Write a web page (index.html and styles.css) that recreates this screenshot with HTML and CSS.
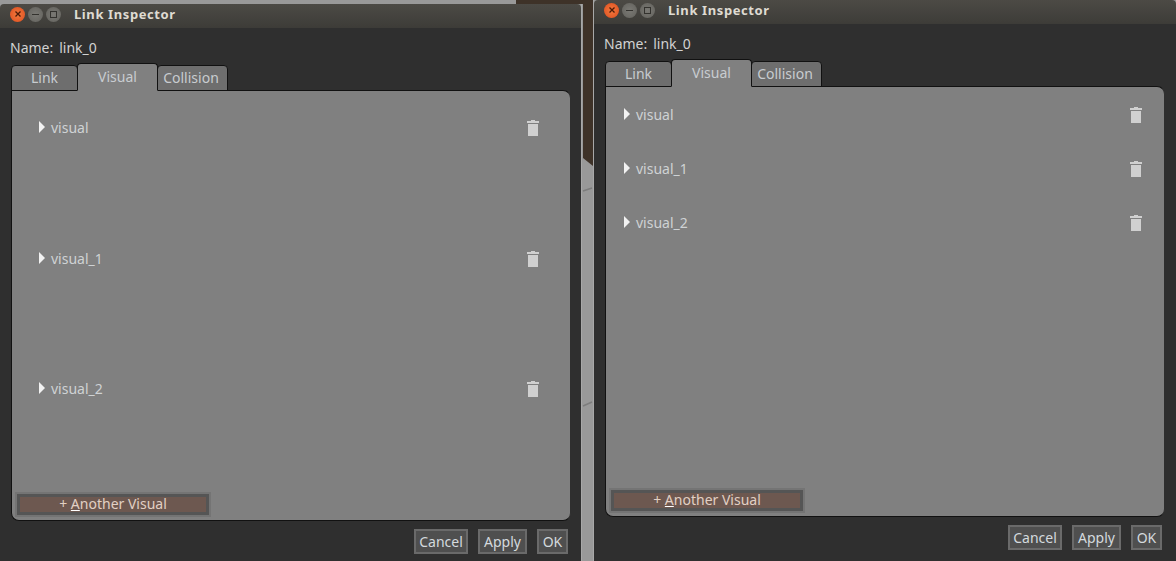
FILE: index.html
```html
<!DOCTYPE html>
<html lang="en">
<head>
<meta charset="UTF-8" />
<title>Link Inspector</title>
<link rel="stylesheet" href="styles.css">
</head>
<body>

  <div class="desktop">
    <svg class="backdrop" width="1176" height="561" viewBox="0 0 1176 561">
      <path d="M516 0H593V166L583 158V4H516z" fill="#3e3228"/>
      <path d="M583 191L592 188M583 406L592 402" stroke="#7d7d7d" stroke-width="1.5" fill="none"/>
    </svg>

    <div class="window window-left">
      <div class="titlebar">
        <div class="win-btn win-close">
          <svg width="8" height="8" viewBox="0 0 8 8"><path d="M1.500 1.500l5 5M6.500 1.500l-5 5" stroke="#4a1a08" stroke-width="1.3" fill="none"/></svg>
        </div>
        <div class="win-btn"><span class="glyph-min"></span></div>
        <div class="win-btn"><span class="glyph-max"></span></div>
        <div class="win-title">Link Inspector</div>
      </div>
      <div class="content">
        <div class="name-row"><span>Name:</span><span>link_0</span></div>
        <div class="tabs">
          <div class="tab tab-link">Link</div>
          <div class="tab tab-visual">Visual</div>
          <div class="tab tab-collision">Collision</div>
        </div>
        <div class="panel">
          <div class="rows rows-tall">
            <div class="row">
              <span class="arrow"></span><span class="row-name">visual</span>
              <svg class="trash" width="12" height="16" viewBox="0 0 12 16"><path d="M4 0h4v1h4v2H0V1h4zM1 4h10v12H1z" fill="#d0d0d0"/></svg>
            </div>
            <div class="row">
              <span class="arrow"></span><span class="row-name">visual_1</span>
              <svg class="trash" width="12" height="16" viewBox="0 0 12 16"><path d="M4 0h4v1h4v2H0V1h4zM1 4h10v12H1z" fill="#d0d0d0"/></svg>
            </div>
            <div class="row">
              <span class="arrow"></span><span class="row-name">visual_2</span>
              <svg class="trash" width="12" height="16" viewBox="0 0 12 16"><path d="M4 0h4v1h4v2H0V1h4zM1 4h10v12H1z" fill="#d0d0d0"/></svg>
            </div>
          </div>
          <div class="add-btn"><div class="add-inner">+ <u>A</u>nother Visual</div></div>
        </div>
        <div class="actions">
          <div class="btn btn-cancel">Cancel</div>
          <div class="btn btn-apply">Apply</div>
          <div class="btn btn-ok">OK</div>
        </div>
      </div>
    </div>

    <div class="window window-right">
      <div class="titlebar">
        <div class="win-btn win-close">
          <svg width="8" height="8" viewBox="0 0 8 8"><path d="M1.500 1.500l5 5M6.500 1.500l-5 5" stroke="#4a1a08" stroke-width="1.3" fill="none"/></svg>
        </div>
        <div class="win-btn"><span class="glyph-min"></span></div>
        <div class="win-btn"><span class="glyph-max"></span></div>
        <div class="win-title">Link Inspector</div>
      </div>
      <div class="content">
        <div class="name-row"><span>Name:</span><span>link_0</span></div>
        <div class="tabs">
          <div class="tab tab-link">Link</div>
          <div class="tab tab-visual">Visual</div>
          <div class="tab tab-collision">Collision</div>
        </div>
        <div class="panel">
          <div class="rows rows-short">
            <div class="row">
              <span class="arrow"></span><span class="row-name">visual</span>
              <svg class="trash" width="12" height="16" viewBox="0 0 12 16"><path d="M4 0h4v1h4v2H0V1h4zM1 4h10v12H1z" fill="#d0d0d0"/></svg>
            </div>
            <div class="row">
              <span class="arrow"></span><span class="row-name">visual_1</span>
              <svg class="trash" width="12" height="16" viewBox="0 0 12 16"><path d="M4 0h4v1h4v2H0V1h4zM1 4h10v12H1z" fill="#d0d0d0"/></svg>
            </div>
            <div class="row">
              <span class="arrow"></span><span class="row-name">visual_2</span>
              <svg class="trash" width="12" height="16" viewBox="0 0 12 16"><path d="M4 0h4v1h4v2H0V1h4zM1 4h10v12H1z" fill="#d0d0d0"/></svg>
            </div>
          </div>
          <div class="add-btn"><div class="add-inner">+ <u>A</u>nother Visual</div></div>
        </div>
        <div class="actions">
          <div class="btn btn-cancel">Cancel</div>
          <div class="btn btn-apply">Apply</div>
          <div class="btn btn-ok">OK</div>
        </div>
      </div>
    </div>
  </div>

</body>
</html>
```

FILE: styles.css
```css
html, body {
  margin: 0;
  height: 100%;
  overflow: hidden;
  background: #999;
}
.desktop {
  position: relative;
  width: 1176px;
  height: 561px;
  overflow: hidden;
  font-family: "Noto Sans", "Open Sans", sans-serif;
  font-size: 14px;
  color: #d2d2d2;
}
.backdrop {
  position: absolute;
  top: 0;
  left: 0;
}
.window {
  position: absolute;
  display: flex;
  flex-direction: column;
  box-sizing: border-box;
}
.window-left {
  left: 0;
  top: 4px;
  width: 582px;
  height: 557px;
  border-right: 1px solid #a8a8a8;
}
.window-right {
  left: 593px;
  top: 0;
  width: 583px;
  height: 561px;
  border-left: 1px solid #a8a8a8;
}

.titlebar {
  box-sizing: border-box;
  height: 24px;
  flex: none;
  display: flex;
  align-items: center;
  padding: 0 0 4px 10px;
  gap: 3px;
  background: linear-gradient(#4c4a45, #3d3c38);
  border-radius: 4px 4px 0 0;
}
.win-btn {
  width: 15px;
  height: 15px;
  flex: none;
  border-radius: 50%;
  display: flex;
  align-items: center;
  justify-content: center;
  background: radial-gradient(#7a7974, #62615c);
}
.win-close {
  background: radial-gradient(#f07a3e, #de4c1e);
}
.glyph-min {
  width: 7px;
  height: 1px;
  background: #33322e;
}
.glyph-max {
  width: 5px;
  height: 5px;
  border: 1px solid #33322e;
}
.win-title {
  margin-left: 10px;
  font-weight: 700;
  font-size: 13px;
  letter-spacing: 0.6px;
  color: #dfdbd2;
}

.content {
  flex: 1;
  display: flex;
  flex-direction: column;
  background: #2f2f2f;
  padding: 0 11px;
}
.name-row {
  height: 35px;
  flex: none;
  padding-top: 4px;
  box-sizing: border-box;
  display: flex;
  align-items: center;
  gap: 6px;
  margin-left: -1px;
}

.tabs {
  display: flex;
  align-items: flex-end;
  height: 28px;
  flex: none;
  margin-bottom: -1px;
}
.tab {
  box-sizing: border-box;
  display: flex;
  align-items: center;
  justify-content: center;
  height: 26px;
  padding-bottom: 2px;
  border: 1px solid #111;
  border-radius: 4px 4px 0 0;
  background: #6e6e6e;
  color: #c8ccd0;
}
.tab-link { width: 67px; }
.tab-visual {
  width: 81px;
  height: 28px;
  margin-left: -1px;
  background: #808080;
  border-bottom: 1px solid #808080;
  position: relative;
  z-index: 1;
}
.tab-collision { width: 71px; margin-left: -1px; padding-right: 3px; }

.panel {
  box-sizing: border-box;
  width: 560px;
  height: 431px;
  flex: none;
  display: flex;
  flex-direction: column;
  justify-content: space-between;
  background: #808080;
  border: 1px solid #111;
  border-right-color: #2f2f2f;
  border-radius: 0 8px 8px 8px;
}
.rows { display: flex; flex-direction: column; }
.rows-tall { padding-top: 28px; }
.rows-tall .row { height: 130.5px; padding: 0 31px 0 27px; }
.rows-short { padding-top: 19px; }
.rows-short .row { height: 54px; padding: 0 22px 0 18px; }
.row {
  box-sizing: border-box;
  display: flex;
  align-items: flex-start;
}
.row:last-child { height: auto; }
.arrow {
  width: 0;
  height: 0;
  margin-top: 2px;
  border-left: 6px solid #f2f2f2;
  border-top: 6px solid transparent;
  border-bottom: 6px solid transparent;
}
.row-name {
  margin: -1px 0 0 6px;
  line-height: 20px;
  color: #cfd2d4;
  flex: 1;
}
.trash { margin-top: 1px; }

.add-btn {
  box-sizing: border-box;
  width: 196px;
  height: 25px;
  margin: 0 0 3px 3px;
  border: 2px solid #747474;
}
.add-inner {
  box-sizing: border-box;
  height: 100%;
  display: flex;
  align-items: center;
  justify-content: center;
  padding-bottom: 2px;
  white-space: pre;
  background: #6d5850;
  border: 3px solid #555;
  color: #e2d0c4;
}
.add-inner u { text-decoration-color: #fff; }

.actions {
  display: flex;
  justify-content: flex-end;
  gap: 10px;
  padding-top: 8px;
  width: 557px;
}
.btn {
  box-sizing: border-box;
  height: 25px;
  display: flex;
  align-items: center;
  justify-content: center;
  background: #4f4f4f;
  border: 2px solid #6a6a6a;
  color: #d4dade;
}
.btn-cancel { width: 54px; }
.btn-apply { width: 49px; }
.btn-ok { width: 31px; }
```
